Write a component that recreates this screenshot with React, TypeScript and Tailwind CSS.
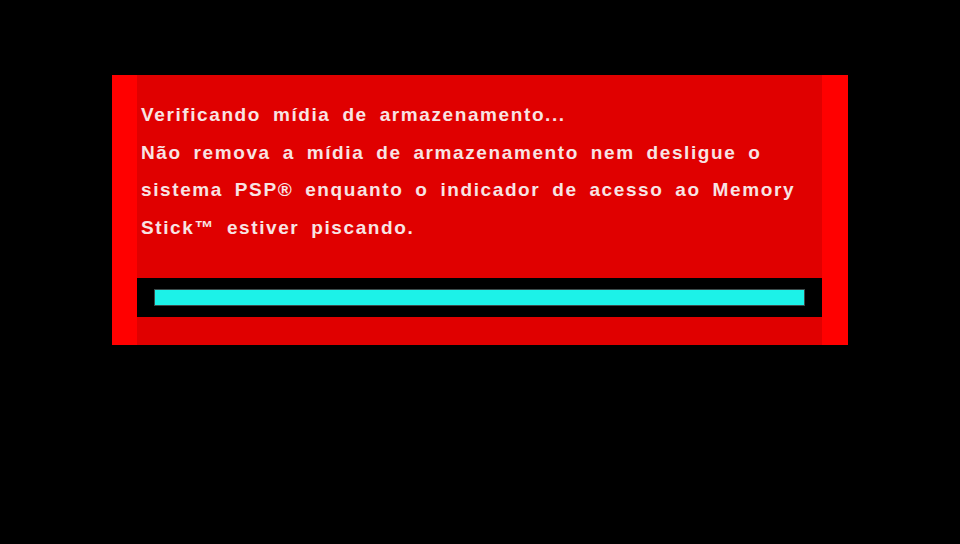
export default function App() {
  return (
    <div className="w-[960px] h-[544px] bg-black pt-[75px] pl-[112px]">
      <div className="flex w-[736px] h-[270px]">
        <div className="w-[25px] bg-[#ff0000]" />
        <div className="flex-1 bg-[#e00000] flex flex-col pt-[21px]">
          <div
            className="pl-[4px] text-[19px] leading-[37.5px] font-bold tracking-[1.6px] [word-spacing:5px] text-[#f8e4e4]"
            style={{ fontFamily: '"Liberation Sans", Arial, sans-serif' }}
          >
            <div>Verificando mídia de armazenamento...</div>
            <div>Não remova a mídia de armazenamento nem desligue o</div>
            <div>sistema PSP® enquanto o indicador de acesso ao Memory</div>
            <div>Stick™ estiver piscando.</div>
          </div>
          <div className="mt-[32px] h-[39px] bg-black px-[17px] py-[11px]">
            <div className="h-full bg-[#1cf2e8] border border-[#3a4a4a]" />
          </div>
        </div>
        <div className="w-[26px] bg-[#ff0000]" />
      </div>
    </div>
  )
}
